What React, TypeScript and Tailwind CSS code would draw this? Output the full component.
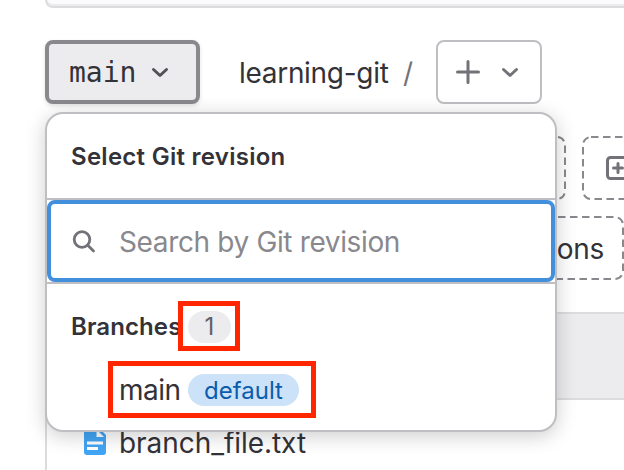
import React from "react";

function Chevron({ className }: { className: string }) {
  return (
    <svg className={className} width="32" height="32" viewBox="0 0 32 32" fill="none" stroke="currentColor" strokeWidth="3" strokeLinecap="round" strokeLinejoin="round">
      <path d="M9.5 13.5 L16 19.5 L22.5 13.5" />
    </svg>
  );
}

function DashedButton({ className, children }: { className: string; children?: React.ReactNode }) {
  return (
    <div className={`relative flex h-16 shrink-0 items-center ${className}`}>
      <svg className="absolute inset-0 h-full w-full" fill="none">
        <rect className="h-[calc(100%-2px)] w-[calc(100%-2px)]" x="1" y="1" rx="8" stroke="#89888d" strokeWidth="2" strokeDasharray="7.5 4.5" />
      </svg>
      {children}
    </div>
  );
}

function RevisionDropdown() {
  return (
    <div className="absolute top-[72px] left-0 z-10 flex h-80 w-[512px] flex-col rounded-[18px] border-2 border-[#bfbfc3] bg-white shadow-[0_4px_20px_rgba(5,5,6,0.2)]">
      <div className="flex h-[84px] shrink-0 items-center px-6 pt-0.5 text-[24px] font-semibold">
        <span className="tracking-[0.27px]">Select Git revision</span>
      </div>
      <div className="h-[86px] shrink-0 border-y-2 border-[#bfbfc3]">
        <div className="flex h-[82px] items-center rounded-lg border-4 border-[#428fdc] bg-white pl-5">
          <svg className="mt-0.5" width="26" height="26" viewBox="0 0 26 26" fill="none" stroke="#737278" strokeWidth="2.8" strokeLinecap="round">
            <circle cx="11" cy="10.5" r="7.8" />
            <path d="M17 16.5 L22.5 22" />
          </svg>
          <span className="ml-[22px] pt-0.5 text-[28px] tracking-[-0.36px] text-[#89888d]">Search by Git revision</span>
        </div>
      </div>
      <div className="flex h-[86px] shrink-0 items-center pl-6">
        <span className="w-[117px] text-[24px] font-semibold tracking-[0.1px]">Branches</span>
        <span className="flex h-8 w-[43px] items-center justify-center rounded-full bg-[#ececef] text-[24px] text-[#626168]">1</span>
      </div>
      <div className="flex h-10 items-center pl-[72px]">
        <span className="w-[69px] text-[28px] tracking-[-0.5px]">main</span>
        <span className="flex h-8 w-[111px] items-center justify-center rounded-full bg-[#cbe2f9] pt-0.5 text-[24px] text-[#0b5cad]">default</span>
      </div>
      <div className="absolute top-[187px] left-[131px] h-[50px] w-[62px] border-5 border-[#ff2600]" />
      <div className="absolute top-[247px] left-[61px] h-[57px] w-[208px] border-5 border-[#ff2600]" />
    </div>
  );
}

export default function App() {
  return (
    <div className="h-[470px] w-[624px] overflow-hidden bg-white pl-[45px] font-['Inter','Noto_Sans',sans-serif] text-[#333238]">
      <div className="h-2 w-[640px] rounded-bl-lg border-b-2 border-l-2 border-[#dcdcde] bg-[#fbfafd] shadow-[inset_0_-2px_0_#ececef]" />
      <div className="mt-8 flex h-16">
        <div className="relative w-[155px]">
          <button className="flex h-16 w-[155px] items-center rounded-lg border-4 border-[#89888d] bg-[#ececef] pl-5 shadow-[0_2px_4px_rgba(0,0,0,0.12)]">
            <span className="w-[67px] pt-0.5 font-['DejaVu_Sans_Mono',monospace] text-[28px] leading-9">main</span>
            <Chevron className="ml-2 text-[#535158]" />
          </button>
          <RevisionDropdown />
        </div>
        <div className="flex items-center pt-0.5 pl-[39px] text-[28px]">
          <span className="w-[164px] tracking-[-0.3px]">learning-git</span>
          <span className="text-[#737278]">/</span>
        </div>
        <button className="mr-[82px] ml-auto flex w-[106px] items-center rounded-lg border-2 border-[#bfbfc3] bg-white pl-[18px] text-[#737278]">
          <svg width="24" height="24" viewBox="0 0 24 24" stroke="currentColor" strokeWidth="3" strokeLinecap="round">
            <path d="M12 1.5 V22.5 M1.5 12 H22.5" />
          </svg>
          <Chevron className="ml-[14px]" />
        </button>
      </div>
      <div className="mt-8 flex w-[780px] gap-4">
        <DashedButton className="w-[521px]" />
        <DashedButton className="w-[240px] pl-6">
          <svg width="26" height="26" viewBox="0 0 26 26" fill="none" stroke="#737278" strokeWidth="3" strokeLinecap="round">
            <rect x="1.5" y="2.5" width="21" height="21" rx="3" />
            <path d="M12 8.5 V17.5 M7.5 13 H16.5" />
          </svg>
        </DashedButton>
      </div>
      <div className="mt-4">
        <DashedButton className="w-[579px] justify-end pt-0.5 pr-[20px]">
          <span className="text-[28px] tracking-[-0.3px]">ons</span>
        </DashedButton>
      </div>
      <div className="mt-8 h-[88px] border-y-2 border-l-2 border-[#dcdcde] bg-[#ececef]" />
      <div className="flex h-[88px] border-l-2 border-[#dcdcde] pl-[37px]">
        <svg className="mt-[27px]" width="22" height="28" viewBox="0 0 22 28">
          <path d="M3 0 H14 L22 8 V25 Q22 28 19 28 H3 Q0 28 0 25 V3 Q0 0 3 0" fill="#42a5f5" />
          <path d="M12.5 2.5 V10 H20" fill="#fff" />
          <path d="M3 16 H19 M3 21.5 H14" stroke="#fff" strokeWidth="3" />
        </svg>
        <span className="mt-[22px] ml-[13px] text-[28px] leading-[42px] tracking-[-0.05px]">branch_file.txt</span>
      </div>
    </div>
  );
}
